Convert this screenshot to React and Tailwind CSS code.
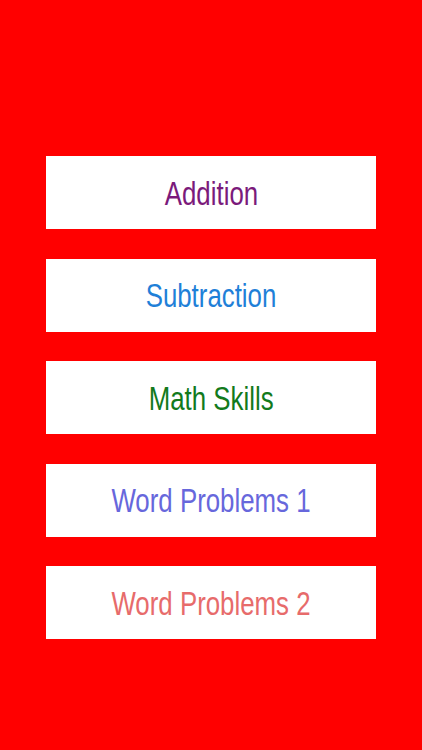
import React from "react";

const items = [
  { label: "Addition", color: "text-[#7b1a7b]" },
  { label: "Subtraction", color: "text-[#1f80d8]" },
  { label: "Math Skills", color: "text-[#127a1c]" },
  { label: "Word Problems 1", color: "text-[#6767dc]" },
  { label: "Word Problems 2", color: "text-[#e76b6b]" },
];

export default function App() {
  return (
    <div className="h-[750px] w-full bg-[#ff0000] pt-[156px]" style={{ fontFamily: '"Liberation Sans", Arial, sans-serif' }}>
      <div className="mx-[46px] flex w-[330px] flex-col gap-[29.5px]">
        {items.map((item) => (
          <button
            key={item.label}
            className="flex h-[73px] w-full items-center justify-center bg-white"
          >
            <span className={`inline-block scale-x-[0.76] whitespace-nowrap text-[34px] leading-none ${item.color}`}>
              {item.label}
            </span>
          </button>
        ))}
      </div>
    </div>
  );
}
